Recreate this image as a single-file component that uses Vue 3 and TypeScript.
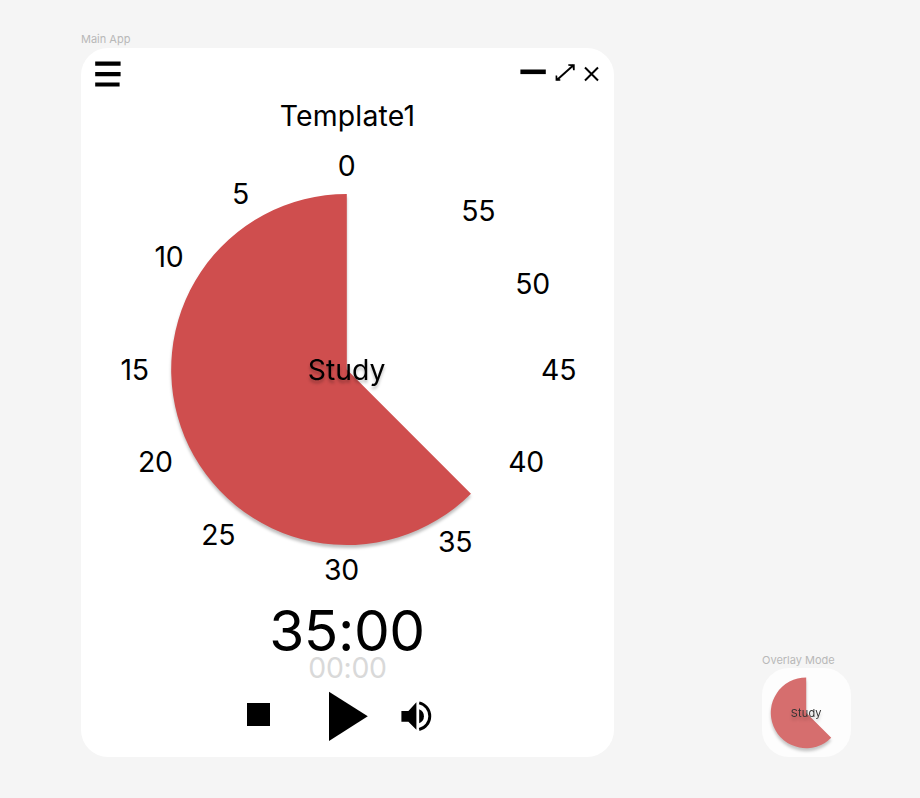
<script setup lang="ts">
interface Mark {
  label: string
  x: number
  y: number
}

// Text centres and baselines on the dial canvas
const marks: Mark[] = [
  { label: '0', x: 265.6, y: 36 },
  { label: '5', x: 159.6, y: 63.5 },
  { label: '10', x: 87.9, y: 126.5 },
  { label: '15', x: 53.5, y: 240 },
  { label: '20', x: 74.4, y: 331.5 },
  { label: '25', x: 137.3, y: 405 },
  { label: '30', x: 260.5, y: 439.5 },
  { label: '35', x: 374, y: 412 },
  { label: '40', x: 445, y: 331.5 },
  { label: '45', x: 477.6, y: 240 },
  { label: '50', x: 451.6, y: 154 },
  { label: '55', x: 397.3, y: 80.5 },
]

function sector(cx: number, cy: number, r: number): string {
  const d = r * Math.SQRT1_2
  return `M${cx} ${cy}V${cy - r}A${r} ${r} 0 1 0 ${cx + d} ${cy + d}Z`
}

const mainSector = sector(265.8, 229.5, 175.6)
const miniSector = sector(44.2, 44.8, 35.4)
</script>

<template>
  <main class="board">
    <section class="frame">
      <h2 class="frame-name">Main App</h2>
      <div class="card">
        <header class="bar">
          <svg class="menu" width="26" height="27" viewBox="0 0 26 27">
            <path d="M.2 .5h25.4v4.2H.2zM.2 11.1h25.4v4.2H.2zM.2 21.4h24.4v4.2H.2z" />
          </svg>
          <svg class="window" width="82" height="22" viewBox="0 0 82 22">
            <path d="M.4 8.5h25.4v4.6H.4z" />
            <path d="M37.2 18.8 53.4 4.2" fill="none" stroke="#000" stroke-width="1.9" />
            <path d="M48.3 3.3h6.4v6h-1.6l-.6-3-1.4-1.2-2.8-.3z" />
            <path d="M35.6 14.6h1.5l.4 2.3 1 1 1.8.3v1.5h-4.7z" />
            <path d="M65 6.5 78 19.5M78 6.5 65 19.5" fill="none" stroke="#000" stroke-width="2" />
          </svg>
        </header>
        <h1 class="title">Template1</h1>
        <svg class="dial" width="533" height="450" viewBox="0 0 533 450">
          <path class="sector" :d="mainSector" />
          <text v-for="m in marks" :key="m.label" :x="m.x" :y="m.y">{{ m.label }}</text>
          <text class="task" x="265.7" y="240.2">Study</text>
        </svg>
        <p class="time">35:00</p>
        <p class="elapsed">00:00</p>
        <div class="controls">
          <svg class="stop" width="23" height="23" viewBox="0 0 23 23"><path d="M0 0h23v23H0z" /></svg>
          <svg class="play" width="39" height="50" viewBox="0 0 39 50"><path d="M0 .7 38.8 25.2 0 49.9z" /></svg>
          <svg class="sound" width="31" height="32" viewBox="0 0 31 32">
            <path d="M.4 11h7l8-8.7v27.4l-8-8H.4z" />
            <path d="M18.2 9.3a7.56 7.56 0 0 1 0 14z" />
            <path d="M18.2 2.9a13.65 13.65 0 0 1 0 26.6" fill="none" stroke="#000" stroke-width="2.9" />
          </svg>
        </div>
      </div>
    </section>
    <section class="frame overlay">
      <h2 class="frame-name">Overlay Mode</h2>
      <svg class="mini" width="89" height="89" viewBox="0 0 89 89">
        <path class="sector" :d="miniSector" />
        <text x="44.2" y="48.7">Study</text>
      </svg>
    </section>
  </main>
</template>

<style>
body {
  background: #f5f5f5;
}
</style>

<style scoped>
.board {
  box-sizing: border-box;
  width: 920px;
  height: 798px;
  padding: 32px 69px 41px 81px;
  display: flex;
  justify-content: space-between;
  align-items: flex-end;
  background: #f5f5f5;
  font-family: Inter, sans-serif;
  color: #000;
}
h1, h2, p {
  margin: 0;
  font-weight: 400;
}
svg {
  display: block;
}
.frame-name {
  height: 15.5px;
  font-size: 11px;
  line-height: 14px;
  color: #b8b8b8;
  white-space: nowrap;
}
.card {
  width: 533px;
  height: 709.5px;
  border-radius: 27px;
  background: #fff;
  display: flex;
  flex-direction: column;
  align-items: center;
}
.bar {
  box-sizing: border-box;
  width: 100%;
  height: 50.5px;
  padding: 13.5px 12px 0 14px;
  display: flex;
  justify-content: space-between;
  align-items: flex-start;
}
.title {
  height: 42px;
  font-size: 28.4px;
  line-height: 35px;
  letter-spacing: 0.2px;
}
.dial text {
  font-size: 28.4px;
  letter-spacing: -0.3px;
  text-anchor: middle;
}
.dial .sector {
  fill: #cf4e4e;
  filter: drop-shadow(0 3.5px 1.8px rgba(0, 0, 0, 0.25));
}
.dial .task {
  letter-spacing: 0;
  filter: drop-shadow(0 3.5px 1.8px rgba(0, 0, 0, 0.25));
}
.time {
  height: 61px;
  padding-right: 1px;
  font-size: 56.8px;
  line-height: 81px;
  letter-spacing: -0.4px;
}
.elapsed {
  height: 40px;
  font-size: 28.4px;
  line-height: 34px;
  letter-spacing: -0.3px;
  color: #d9d9d9;
}
.controls {
  width: 100%;
  box-sizing: border-box;
  padding-left: 166px;
  display: flex;
  align-items: center;
}
.play {
  margin-left: 59px;
}
.sound {
  margin-left: 33px;
}
.stop {
  margin-bottom: 3px;
}
.mini {
  border-radius: 27px;
  background: #fdfdfd;
}
.mini .sector {
  fill: #d66e6e;
  filter: drop-shadow(0 3.5px 1.8px rgba(0, 0, 0, 0.22));
}
.mini text {
  font-size: 11px;
  letter-spacing: 0.2px;
  text-anchor: middle;
  fill: #333;
  filter: drop-shadow(0 3.5px 1.8px rgba(0, 0, 0, 0.2));
}
</style>
